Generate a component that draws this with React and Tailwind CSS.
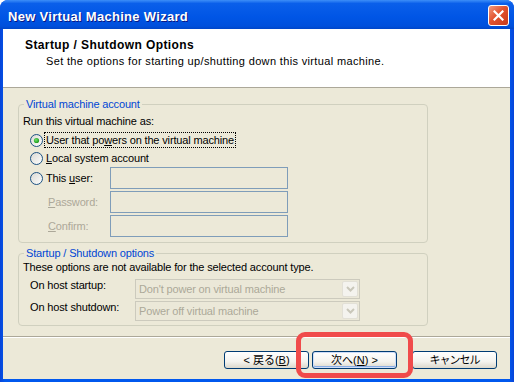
import React from 'react';

const Radio = ({ checked }) => (
  <svg width="13" height="13" viewBox="0 0 13 13" className="shrink-0">
    <defs>
      <linearGradient id="radioBg" x1="0" y1="0" x2="1" y2="1">
        <stop offset="0" stopColor="#D8D8D2" />
        <stop offset="1" stopColor="#FFFFFF" />
      </linearGradient>
      <radialGradient id="radioDot" cx="0.4" cy="0.4" r="0.6">
        <stop offset="0" stopColor="#6EE36A" />
        <stop offset="1" stopColor="#1E9A1E" />
      </radialGradient>
    </defs>
    <circle cx="6.5" cy="6.5" r="6" fill="url(#radioBg)" stroke="#1C5180" strokeWidth="1" />
    {checked && <circle cx="6.5" cy="6.5" r="2.6" fill="url(#radioDot)" />}
  </svg>
);

const TextBox = () => (
  <div className="h-[22px] w-[178px] border border-[#7F9DB9] bg-[#ECE9D8]" />
);

const Combo = ({ value }) => (
  <div className="flex h-[20px] w-[225px] items-center border border-[#CCCABD] bg-[#EBE8D8]">
    <span className="flex-1 pl-[3px] leading-[13px] text-[#ACA899]">{value}</span>
    <div className="mr-[1px] flex h-[16px] w-[16px] items-center justify-center rounded-[2px] border border-[#E2E0D6] bg-[#F4F3EE]">
      <svg width="9" height="6" viewBox="0 0 9 6">
        <path d="M1 1 L4.5 4.5 L8 1" fill="none" stroke="#C9C7BA" strokeWidth="2" />
      </svg>
    </div>
  </div>
);

const Button = ({ children, isDefault }) => (
  <button
    className={`flex h-[18px] w-[85px] items-center justify-center rounded-[3px] border border-[#003C74] bg-[linear-gradient(to_bottom,#FFFFFF,#F4F3EE_60%,#DCD8CC)] text-[11px] leading-[13px] tracking-normal text-black ${
      isDefault ? 'shadow-[inset_0_0_0_1px_#CEDDF8,inset_0_-1px_0_1px_#89ADE4]' : ''
    }`}
  >
    {children}
  </button>
);

const GroupBox = ({ title, className, children }) => (
  <div className={`relative rounded-[4px] border border-[#D0D0BF] ${className}`}>
    <span className="absolute left-[5px] top-[-7px] bg-[#ECE9D8] px-[2px] leading-[13px] text-[#0046D5]">
      {title}
    </span>
    {children}
  </div>
);

export default function App() {
  return (
    <div className="h-[382px] w-[514px] bg-white font-['Liberation_Sans','Noto_Sans_CJK_JP',sans-serif] text-[11px] tracking-[-0.15px] text-black">
      <div className="flex h-full flex-col rounded-t-[8px] bg-[linear-gradient(to_right,#0844D8,#0058EE_1%,#0058EE_99%,#0844D8)]">
        {/* title bar */}
        <div className="flex h-[29px] shrink-0 items-center justify-between rounded-t-[8px] bg-[linear-gradient(to_bottom,#3D8EF8,#0A5FEA_12%,#0055E5_60%,#0050DC_90%,#0046C8)] pl-[8px] pr-[5px]">
          <span className="pt-[3px] text-[13px] font-bold leading-[15px] tracking-[0.3px] text-white [text-shadow:1px_1px_0_#0A1883]">
            New Virtual Machine Wizard
          </span>
          <div className="mt-[2px] flex h-[21px] w-[21px] items-center justify-center rounded-[3px] border border-white bg-[linear-gradient(135deg,#F19A7E,#E2532F_45%,#C83A1A)]">
            <svg width="11" height="11" viewBox="0 0 11 11">
              <path d="M1.5 1.5 L9.5 9.5 M9.5 1.5 L1.5 9.5" stroke="#FFFFFF" strokeWidth="2.2" strokeLinecap="square" />
            </svg>
          </div>
        </div>

        <div className="mb-[3px] ml-[3px] mr-[4px] flex flex-1 flex-col">
          {/* header */}
          <div className="h-[59px] shrink-0 border-b border-[#ACA899] bg-white">
            <div className="pl-[22px] pt-[9px] text-[12px] font-bold leading-[14px] tracking-[0.4px]">
              Startup / Shutdown Options
            </div>
            <div className="pl-[43px] pt-[3px] leading-[13px] tracking-[0.35px]">
              Set the options for starting up/shutting down this virtual machine.
            </div>
          </div>

          {/* body */}
          <div className="flex flex-1 flex-col bg-[#ECE9D8]">
            <GroupBox title="Virtual machine account" className="ml-[15px] mt-[16px] h-[139px] w-[410px]">
              <div className="pl-[4px] pt-[10px] leading-[13px]">Run this virtual machine as:</div>
              <div className="mt-[3px] flex h-[18px] items-center gap-[2px] pl-[11px]">
                <Radio checked />
                <span className="px-[1px] leading-[14px] outline-1 outline-dotted outline-black">
                  User that po<u>w</u>ers on the virtual machine
                </span>
              </div>
              <div className="flex h-[18px] items-center gap-[2px] pl-[11px]">
                <Radio />
                <span className="px-[1px] leading-[14px]">
                  <u>L</u>ocal system account
                </span>
              </div>
              <div className="flex h-[22px] items-center">
                <div className="flex w-[91px] items-center gap-[2px] pl-[11px]">
                  <Radio />
                  <span className="px-[1px] leading-[14px]">
                    This <u>u</u>ser:
                  </span>
                </div>
                <TextBox />
              </div>
              <div className="mt-[2px] flex h-[22px] items-center">
                <span className="w-[91px] pl-[29px] text-[#ACA899]">
                  <u>P</u>assword:
                </span>
                <TextBox />
              </div>
              <div className="mt-[2px] flex h-[22px] items-center">
                <span className="w-[91px] pl-[29px] text-[#ACA899]">
                  <u>C</u>onfirm:
                </span>
                <TextBox />
              </div>
            </GroupBox>

            <GroupBox title="Startup / Shutdown options" className="ml-[15px] mt-[10px] h-[73px] w-[410px]">
              <div className="pl-[4px] pt-[7px] leading-[13px]">
                These options are not available for the selected account type.
              </div>
              <div className="mt-[5px] flex items-start">
                <span className="w-[116px] pl-[11px] leading-[13px]">On host startup:</span>
                <Combo value="Don't power on virtual machine" />
              </div>
              <div className="mt-[2px] flex items-start">
                <span className="w-[116px] pl-[11px] leading-[13px]">On host shutdown:</span>
                <Combo value="Power off virtual machine" />
              </div>
            </GroupBox>

            <div className="mt-[10px] h-[2px] border-b border-t border-b-white border-t-[#ACA899]" />

            <div className="mt-[13px] flex justify-end pr-[13px]">
              <Button>
                &lt; 戻る(<u>B</u>)
              </Button>
              <div className="relative ml-[3px]">
                <Button isDefault>
                  次へ(<u>N</u>) &gt;
                </Button>
                <div className="pointer-events-none absolute left-[-16px] top-[-19px] h-[46px] w-[117px] rounded-[9px] border-[5px] border-[#F04B4B]" />
              </div>
              <div className="ml-[15px]">
                <Button>
                  <span className="tracking-[-1px]">キャンセル</span>
                </Button>
              </div>
            </div>
          </div>
        </div>
      </div>
    </div>
  );
}
